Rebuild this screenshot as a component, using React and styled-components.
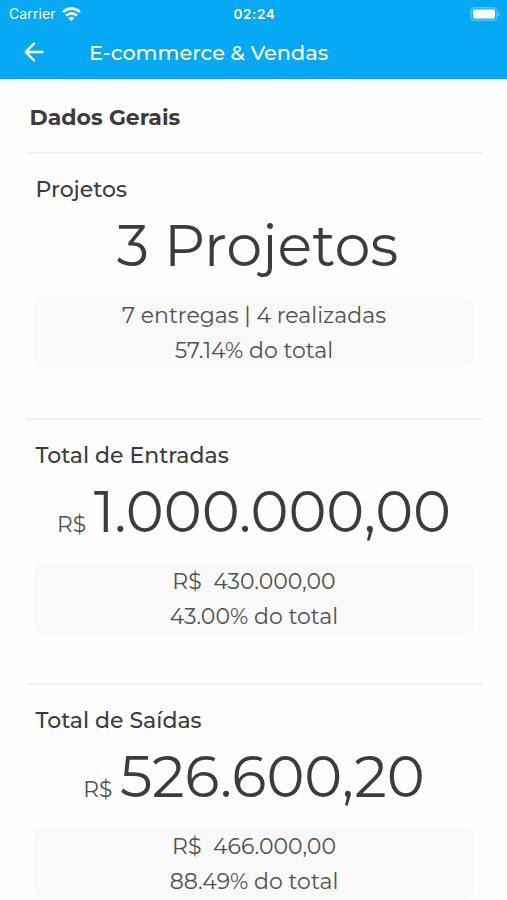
import styled, { createGlobalStyle } from "styled-components";


const sections = [
    {
        title: "Projetos",
        value: "3 Projetos",
        indent: 7,
        lines: ["7 entregas | 4 realizadas", "57.14% do total"],
    },
    {
        title: "Total de Entradas",
        currency: "R$",
        value: "1.000.000,00",
        indent: 0,
        lines: ["R$  430.000,00", "43.00% do total"],
    },
    {
        title: "Total de Saídas",
        currency: "R$",
        value: "526.600,20",
        indent: 0,
        lines: ["R$  466.000,00", "88.49% do total"],
    },
];


const App = () => {
    return (
        <Screen>
            <GlobalStyle />
            <Header>
                <StatusBar>
                    <Carrier>
                        Carrier
                        <WifiIcon />
                    </Carrier>
                    <Clock>02:24</Clock>
                    <Battery>
                        <BatteryIcon />
                    </Battery>
                </StatusBar>
                <NavBar>
                    <BackButton aria-label="Voltar">
                        <ArrowIcon />
                    </BackButton>
                    <NavTitle>E-commerce &amp; Vendas</NavTitle>
                </NavBar>
            </Header>
            <Content>
                <Heading>Dados Gerais</Heading>
                {sections.map((item) => (
                    <Section key={item.title}>
                        <SectionTitle>{item.title}</SectionTitle>
                        <ValueRow $indent={item.indent}>
                            {item.currency && <Currency>{item.currency}</Currency>}
                            <Value>{item.value}</Value>
                        </ValueRow>
                        <Summary>
                            {item.lines.map((line) => (
                                <SummaryLine key={line}>{line}</SummaryLine>
                            ))}
                        </Summary>
                    </Section>
                ))}
            </Content>
        </Screen>
    );
};


const WifiIcon = () => (
    <svg width="19" height="14" viewBox="0 0 19 14" fill="none" stroke="#fff" strokeWidth="2.6">
        <path d="M1 5.2C5.8.4 13.2.4 18 5.2" />
        <path d="M4 8.6C7.2 5.6 11.8 5.6 15 8.6" />
        <path d="M6.4 10.9C8.3 9.3 10.7 9.3 12.6 10.9L9.5 14Z" fill="#fff" stroke="none" />
    </svg>
);

const BatteryIcon = () => (
    <svg width="30" height="14" viewBox="0 0 30 14">
        <rect x="0.8" y="0.6" width="26" height="12.8" rx="3.8" fill="#fff" fillOpacity="0.12" stroke="#fff" strokeOpacity="0.28" strokeWidth="1.2" />
        <rect x="3" y="2.6" width="22" height="8.8" rx="1.8" fill="#fff" />
        <path d="M27.8 4.8c2.4.8 2.4 3.6 0 4.4z" fill="#fff" fillOpacity="0.4" />
    </svg>
);

const ArrowIcon = () => (
    <svg width="20" height="20" viewBox="0 0 20 20" fill="none" stroke="#fff" strokeWidth="2.3" strokeLinecap="round">
        <path d="M18.6 10H2M10 1.6L1.7 10L10 18.4" />
    </svg>
);


const GlobalStyle = createGlobalStyle`
* {
    box-sizing: border-box;
}

body {
    margin: 0;
    background: #fefefe;
    overflow: hidden;
}
`

const Screen = styled.div`
    height: 900px;
    overflow: hidden;
    background: #fefefe;
    color: #3c3c3c;
    font-family: "Montserrat", "Inter", sans-serif;
`

/* Header */
const Header = styled.header`
    height: 79px;
    background: #05a9f4;
    color: #fff;
`

const StatusBar = styled.div`
    display: grid;
    grid-template-columns: 1fr auto 1fr;
    align-items: center;
    height: 27px;
    padding: 0 7px 0 9px;
    font-family: "Inter", sans-serif;
`

const Carrier = styled.div`
    display: flex;
    align-items: center;
    gap: 6px;
    font-size: 14px;
    letter-spacing: 0.1px;
`

const Clock = styled.div`
    font-size: 13.5px;
    font-weight: 600;
    letter-spacing: 0.6px;
`

const Battery = styled.div`
    display: flex;
    justify-content: flex-end;
`

const NavBar = styled.div`
    display: flex;
    align-items: center;
    height: 50px;
    padding-left: 24px;
`

const BackButton = styled.button`
    display: flex;
    width: 20px;
    padding: 0;
    border: none;
    background: none;
`

const NavTitle = styled.h1`
    margin: 0 0 0 45px;
    font-size: 20.8px;
    font-weight: 500;
    white-space: nowrap;
`

/* Page content */
const Content = styled.main`
    padding: 0 24px 0 26px;
`

const Heading = styled.h2`
    height: 73px;
    margin: 0;
    padding: 2px 0 0 3.5px;
    font-size: 22px;
    font-weight: 700;
    line-height: 73px;
`

const Section = styled.section`
    height: 265.5px;
    padding: 0 9px 0 8px;
    border-top: 2px solid #f0f0f0;
`

const SectionTitle = styled.h3`
    height: 36px;
    margin: 18px 0 0 1.5px;
    font-size: 22px;
    font-weight: 500;
    line-height: 36px;
`

const ValueRow = styled.div`
    display: flex;
    align-items: baseline;
    justify-content: center;
    gap: 7.5px;
    height: 88px;
    padding-left: ${({ $indent }) => $indent}px;
    line-height: 76px;
`

const Currency = styled.span`
    color: #505050;
    font-size: 21.8px;
`

const Value = styled.span`
    font-size: 57.3px;
    font-weight: 400;
    white-space: nowrap;
`

const Summary = styled.div`
    height: 72px;
    padding-top: 2px;
    border-radius: 10px;
    background: #f9f9f9;
    color: #505050;
`

const SummaryLine = styled.p`
    margin: 0;
    font-size: 22px;
    line-height: 35px;
    text-align: center;
    white-space: pre;
`


export default App;
